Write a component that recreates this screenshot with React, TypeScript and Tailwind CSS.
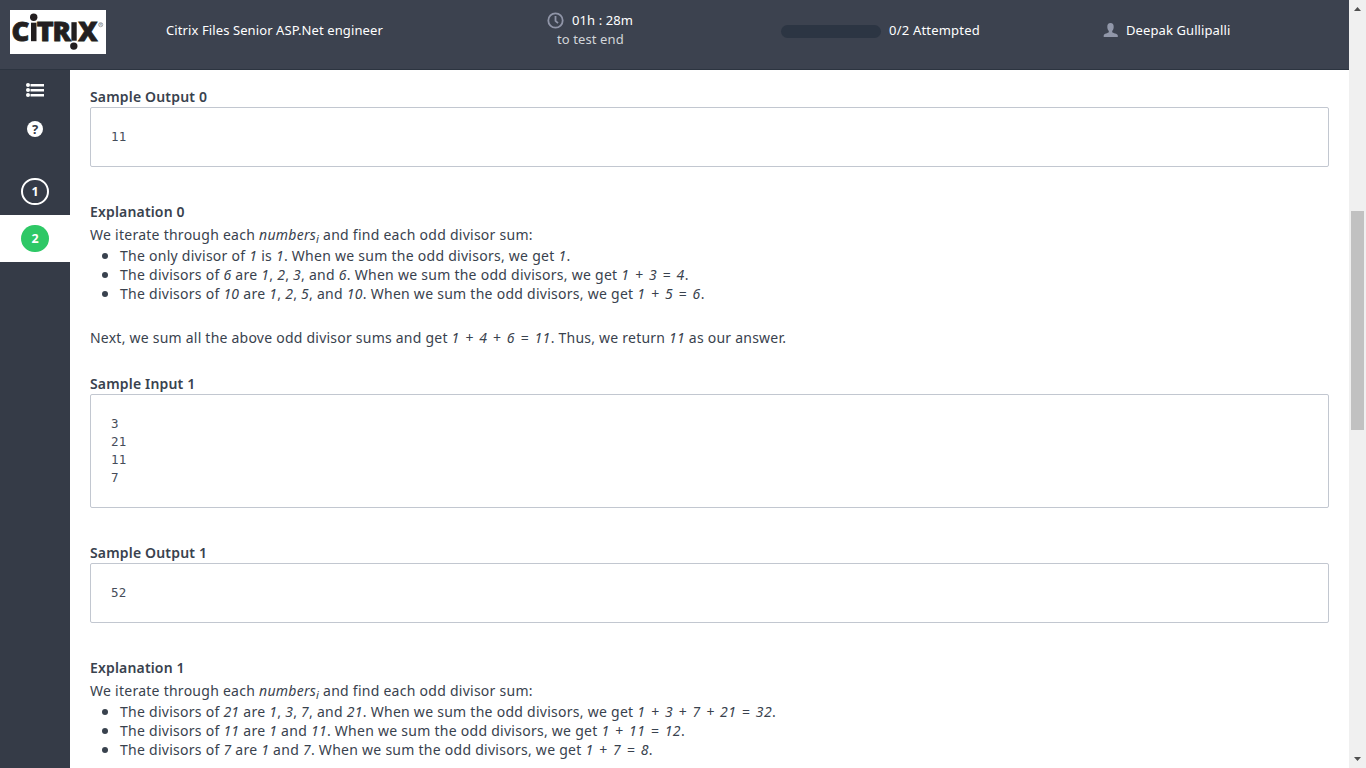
import React from "react";

const Sub = () => (
  <i>
    numbers<span className="relative top-[3px] text-[11px]">i</span>
  </i>
);

function Heading({ children }: { children: React.ReactNode }) {
  return <h3 className="h-5 whitespace-nowrap text-[14px] font-semibold leading-5 tracking-[0.17px]">{children}</h3>;
}

function Expr({ children }: { children: React.ReactNode }) {
  return <i className="[word-spacing:1.500px] tracking-[0.400px]">{children}</i>;
}

function Sample({ lines }: { lines: string[] }) {
  return (
    <pre className="rounded-[2px] border border-[#c2c7d0] px-5 pt-5 pb-[20px] font-['DejaVu_Sans_Mono',monospace] text-[12.5px] leading-[18px] tracking-[0.2px] text-[#454c59]">
      {lines.join("\n") + "\n"}
    </pre>
  );
}

function Intro() {
  return (
    <p className="h-6 whitespace-nowrap text-[14px] leading-[25px] tracking-[0.26px]">
      We iterate through each <Sub /> and find each odd divisor sum:
    </p>
  );
}

function Bullet({ children }: { children: React.ReactNode }) {
  return (
    <li className="flex h-[19px] items-center whitespace-nowrap text-[14px] leading-[19px] tracking-[0.265px]">
      <span className="mr-[12px] ml-3 size-[6px] shrink-0 rounded-full bg-[#39424e]" />
      <span>{children}</span>
    </li>
  );
}

function Logo() {
  return (
    <svg className="block h-11 w-24 bg-white" viewBox="0 0 96 44" fill="#231f20">
      <g fontFamily="'Open Sans', sans-serif" fontWeight="800" fontSize="26.500" stroke="#231f20" strokeWidth="0.8">
        <text x="1.500" y="31" textLength="18" lengthAdjust="spacingAndGlyphs">C</text>
        <text x="26.700" y="31" textLength="17" lengthAdjust="spacingAndGlyphs">T</text>
        <text x="42.500" y="31" textLength="18.500" lengthAdjust="spacingAndGlyphs">R</text>
        <text x="68.200" y="31" textLength="19.500" lengthAdjust="spacingAndGlyphs">X</text>
      </g>
      <rect x="21" y="12.700" width="5.500" height="18.500" />
      <circle cx="23.700" cy="7.200" r="3.700" />
      <rect x="61.400" y="12.200" width="5.300" height="18.500" />
      <circle cx="63.800" cy="36.100" r="3.700" />
      <circle cx="90.700" cy="14.700" r="2.100" fill="none" stroke="#777" strokeWidth="0.600" />
      <text x="89.600" y="16" fontSize="3.500" fill="#555" fontFamily="Liberation Sans, sans-serif">R</text>
    </svg>
  );
}

export default function App() {
  return (
    <div className="flex h-screen w-full overflow-hidden bg-white font-['Noto_Sans','Open_Sans',sans-serif] text-[#39424e]">
      <div className="flex min-w-0 flex-1 flex-col">
        <header className="flex h-[70px] shrink-0 border-b border-[#2c3440] bg-[#3c424f] text-[13px] leading-[19px] tracking-[0.1px] text-white">
          <div className="w-[166px] pt-[10px] pl-[10px]"><Logo /></div>
          <div className="w-[381px] whitespace-nowrap pt-[21px]">Citrix Files Senior ASP.Net engineer</div>
          <div className="w-[234px] whitespace-nowrap pt-[11px]">
            <div className="flex items-center">
              <svg className="mr-2 size-[17px]" viewBox="0 0 17 17" fill="none" stroke="#9095a8" strokeWidth="1.8">
                <circle cx="8.500" cy="8.500" r="7.200" />
                <path d="M8.500 4v4.800l2.500 2.300" />
              </svg>
              <span>01h : 28m</span>
            </div>
            <div className="pl-[10px] text-[#d2d5d9]">to test end</div>
          </div>
          <div className="flex w-[322px] whitespace-nowrap pt-[21px]">
            <span className="mt-1 mr-2 h-[13px] w-[100px] rounded-full bg-[#2c3543]" />
            <span className="tracking-[0.2px]">0/2 Attempted</span>
          </div>
          <div className="flex whitespace-nowrap pt-[21px]">
            <svg className="mt-[2px] mr-[8px] h-[14px] w-[15px]" viewBox="0 0 15 14" fill="#9197a9">
              <path d="M7.500 0C9.700 0 10.800 1.500 10.700 4c0 2-.8 3.200-1.500 4v1.200c.6.900 5.300 1.300 5.600 3.200V14H.7v-1.600C1 10.500 5.200 10.100 5.800 9.200V8C5.100 7.200 4.300 6 4.300 4 4.200 1.500 5.300 0 7.500 0Z" />
            </svg>
            <span>Deepak Gullipalli</span>
          </div>
        </header>
        <div className="flex min-h-0 flex-1">
          <aside className="flex w-[70px] shrink-0 flex-col items-center bg-[#353b47] text-[12.5px] font-bold text-white">
            <svg className="mt-[12px] h-4 w-[18px] shrink-0" viewBox="0 0 18 16" fill="white">
              <circle cx="2" cy="3" r="2" /><circle cx="2" cy="8" r="2" /><circle cx="2" cy="13" r="2" />
              <rect x="4.500" y="2" width="13.500" height="2.500" /><rect x="4.500" y="7" width="13.500" height="2.500" /><rect x="4.500" y="12" width="13.500" height="2.500" />
            </svg>
            <span className="mt-[23px] flex size-4 shrink-0 items-center justify-center rounded-full bg-white text-[13px] leading-4 text-[#353b47]">?</span>
            <span className="mt-[41px] flex h-[27px] w-7 shrink-0 items-center justify-center rounded-full border-2 border-white pt-[2px]">1</span>
            <div className="mt-[10px] flex h-[47px] w-full shrink-0 items-center justify-center bg-white">
              <span className="flex h-[27px] w-7 items-center justify-center rounded-full bg-[#2ec866] pt-[2px]">2</span>
            </div>
          </aside>
          <main className="min-w-0 flex-1 overflow-hidden px-5 pt-[17px]">
            <Heading>Sample Output 0</Heading>
            <div className="mb-[35px] flex h-[60px] flex-col [&>pre]:flex-1"><Sample lines={["11"]} /></div>
            <Heading>Explanation 0</Heading>
            <Intro />
            <ul>
              <Bullet>The only divisor of <i>1</i> is <i>1</i>. When we sum the odd divisors, we get <i>1</i>.</Bullet>
              <Bullet>The divisors of <i>6</i> are <i>1</i>, <i>2</i>, <i>3</i>, and <i>6</i>. When we sum the odd divisors, we get <Expr>1 + 3 = 4</Expr>.</Bullet>
              <Bullet>The divisors of <i>10</i> are <i>1</i>, <i>2</i>, <i>5</i>, and <i>10</i>. When we sum the odd divisors, we get <Expr>1 + 5 = 6</Expr>.</Bullet>
            </ul>
            <p className="mt-[25px] mb-[26px] h-5 whitespace-nowrap text-[14px] leading-5 tracking-[0.23px]">
              Next, we sum all the above odd divisor sums and get <Expr>1 + 4 + 6 = 11</Expr>. Thus, we return <i>11</i> as our answer.
            </p>
            <Heading>Sample Input 1</Heading>
            <div className="mb-[35px] flex h-[114px] flex-col [&>pre]:flex-1"><Sample lines={["3", "21", "11", "7"]} /></div>
            <Heading>Sample Output 1</Heading>
            <div className="mb-[35px] flex h-[60px] flex-col [&>pre]:flex-1"><Sample lines={["52"]} /></div>
            <Heading>Explanation 1</Heading>
            <Intro />
            <ul>
              <Bullet>The divisors of <i>21</i> are <i>1</i>, <i>3</i>, <i>7</i>, and <i>21</i>. When we sum the odd divisors, we get <Expr>1 + 3 + 7 + 21 = 32</Expr>.</Bullet>
              <Bullet>The divisors of <i>11</i> are <i>1</i> and <i>11</i>. When we sum the odd divisors, we get <Expr>1 + 11 = 12</Expr>.</Bullet>
              <Bullet>The divisors of <i>7</i> are <i>1</i> and <i>7</i>. When we sum the odd divisors, we get <Expr>1 + 7 = 8</Expr>.</Bullet>
            </ul>
          </main>
        </div>
      </div>
      <div className="flex w-[17px] shrink-0 flex-col items-center justify-between bg-[#f0f0f0] pt-[7px] pb-[7px]">
        <svg className="h-1 w-[7px]" viewBox="0 0 7 4" fill="#505050"><path d="M3.500 0 7 4H0Z" /></svg>
        <div className="mt-[200px] mb-auto h-[219px] w-[13px] bg-[#c1c1c1]" />
        <svg className="h-1 w-[7px]" viewBox="0 0 7 4" fill="#505050"><path d="M0 0h7L3.500 4Z" /></svg>
      </div>
    </div>
  );
}
